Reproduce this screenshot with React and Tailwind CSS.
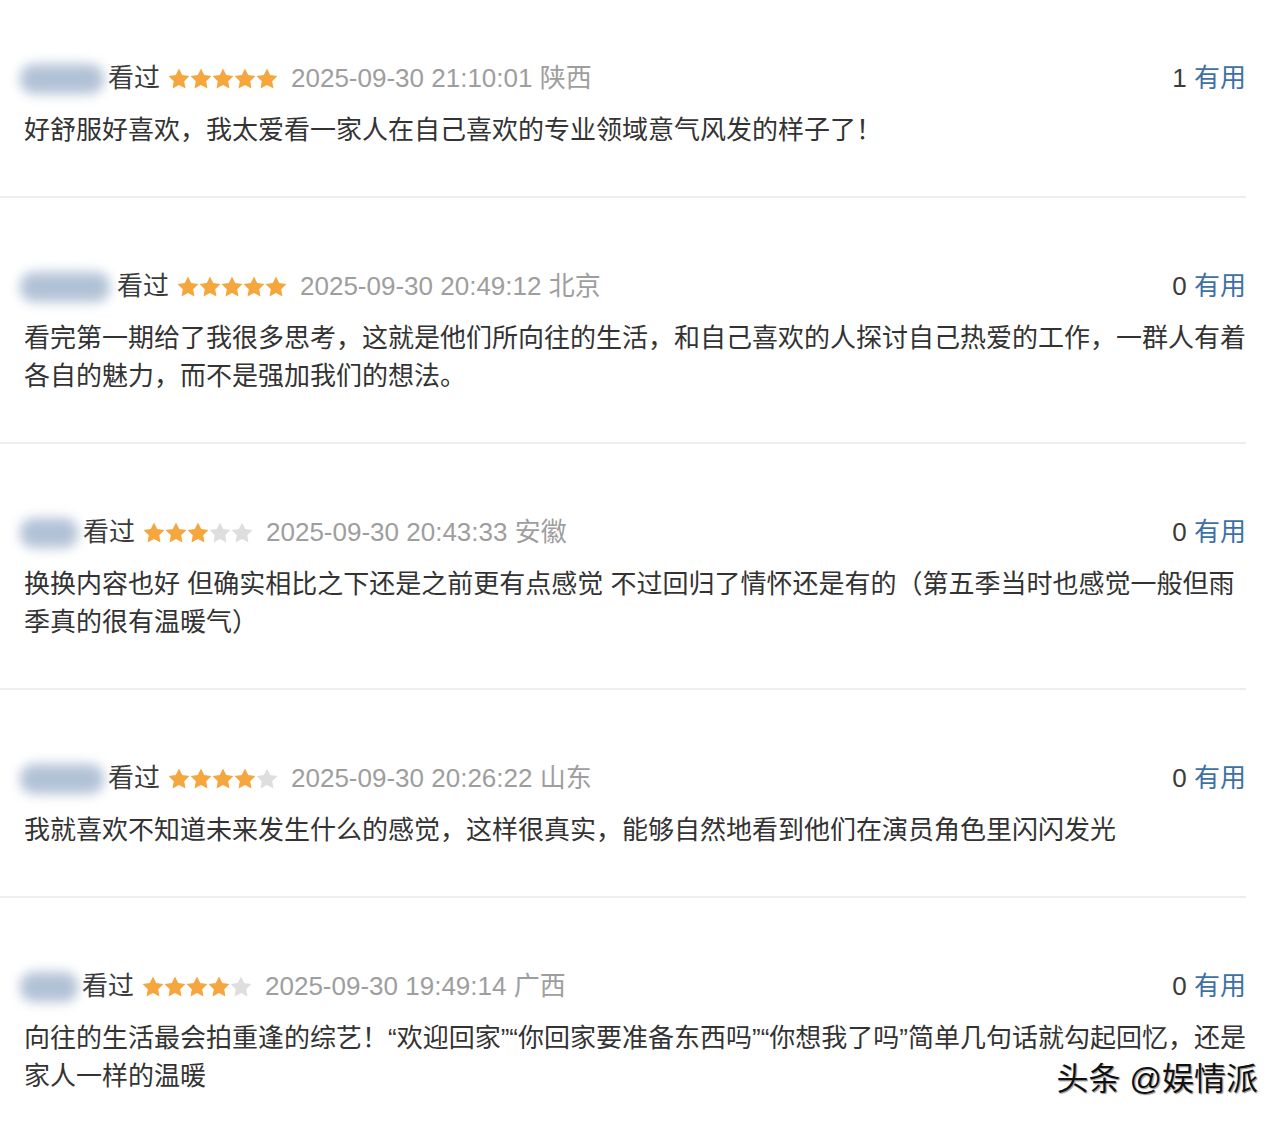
import React from "react";

const FONT = { fontFamily: '"Liberation Sans","Noto Sans CJK SC",sans-serif' };

const comments = [
  {
    nameW: 84,
    blobW: 84,
    stars: 5,
    time: "2025-09-30 21:10:01 陕西",
    useful: "1",
    lines: ["好舒服好喜欢，我太爱看一家人在自己喜欢的专业领域意气风发的样子了！"],
  },
  {
    nameW: 93,
    blobW: 90,
    stars: 5,
    time: "2025-09-30 20:49:12 北京",
    useful: "0",
    lines: [
      "看完第一期给了我很多思考，这就是他们所向往的生活，和自己喜欢的人探讨自己热爱的工作，一群人有着",
      "各自的魅力，而不是强加我们的想法。",
    ],
  },
  {
    nameW: 59,
    blobW: 58,
    stars: 3,
    time: "2025-09-30 20:43:33 安徽",
    useful: "0",
    lines: [
      "换换内容也好 但确实相比之下还是之前更有点感觉 不过回归了情怀还是有的（第五季当时也感觉一般但雨",
      "季真的很有温暖气）",
    ],
  },
  {
    nameW: 84,
    blobW: 84,
    stars: 4,
    time: "2025-09-30 20:26:22 山东",
    useful: "0",
    lines: ["我就喜欢不知道未来发生什么的感觉，这样很真实，能够自然地看到他们在演员角色里闪闪发光"],
  },
  {
    nameW: 58,
    blobW: 58,
    stars: 4,
    time: "2025-09-30 19:49:14 广西",
    useful: "0",
    lines: [
      "向往的生活最会拍重逢的综艺！“欢迎回家”“你回家要准备东西吗”“你想我了吗”简单几句话就勾起回忆，还是",
      "家人一样的温暖",
    ],
  },
];

function Star({ on }) {
  return (
    <svg width="22" height="21" viewBox="0 0 22 21" className="block">
      <path
        d="M11 0.5L14.23 7.05L21.46 8.1L16.23 13.2L17.47 20.4L11 17L4.53 20.4L5.77 13.2L0.54 8.1L7.77 7.05Z"
        fill={on ? "#f5a73e" : "#dedede"}
      />
    </svg>
  );
}

function Comment({ c, first, last }) {
  return (
    <div
      className={`${first ? "pt-[58px]" : "pt-[68px]"} ${
        last ? "pb-0" : "pb-[47px] border-b-2 border-[#eeeeee]"
      }`}
    >
      <div className="flex items-center h-[40px] pl-[24px] text-[26px] leading-[40px]">
        <div className="relative h-[40px]" style={{ width: c.nameW }}>
          <div
            className="absolute left-[-4px] top-[6px] h-[30px] rounded-[14px] bg-[#b2c2d6] blur-[6px]"
            style={{ width: c.blobW }}
          />
        </div>
        <span className="text-[#3b3b3b]">看过</span>
        <div className="flex items-center ml-[8px]">
          {[0, 1, 2, 3, 4].map((i) => (
            <Star key={i} on={i < c.stars} />
          ))}
        </div>
        <span className="ml-[13px] text-[#9e9e9e]">{c.time}</span>
        <div className="ml-auto">
          <span className="text-[#3b3b3b]">{c.useful} </span>
          <span className="text-[#3d71a6]">有用</span>
        </div>
      </div>
      <div className="mt-[13px] pl-[24px] text-[26px] leading-[38px] text-[#333333]">
        {c.lines.map((l, i) => (
          <div key={i} className="whitespace-nowrap">
            {l}
          </div>
        ))}
      </div>
    </div>
  );
}

export default function App() {
  return (
    <div className="relative w-[1288px] h-[1126px] overflow-hidden bg-white" style={FONT}>
      <div className="w-[1246px]">
        {comments.map((c, i) => (
          <Comment key={i} c={c} first={i === 0} last={i === comments.length - 1} />
        ))}
      </div>
      <div className="absolute right-[30px] top-[1058px] text-[32px] leading-[42px] text-[#111111] [text-shadow:0_0_2px_#ffffff,1px_1px_1px_#777777]">
        头条 @娱情派
      </div>
    </div>
  );
}
